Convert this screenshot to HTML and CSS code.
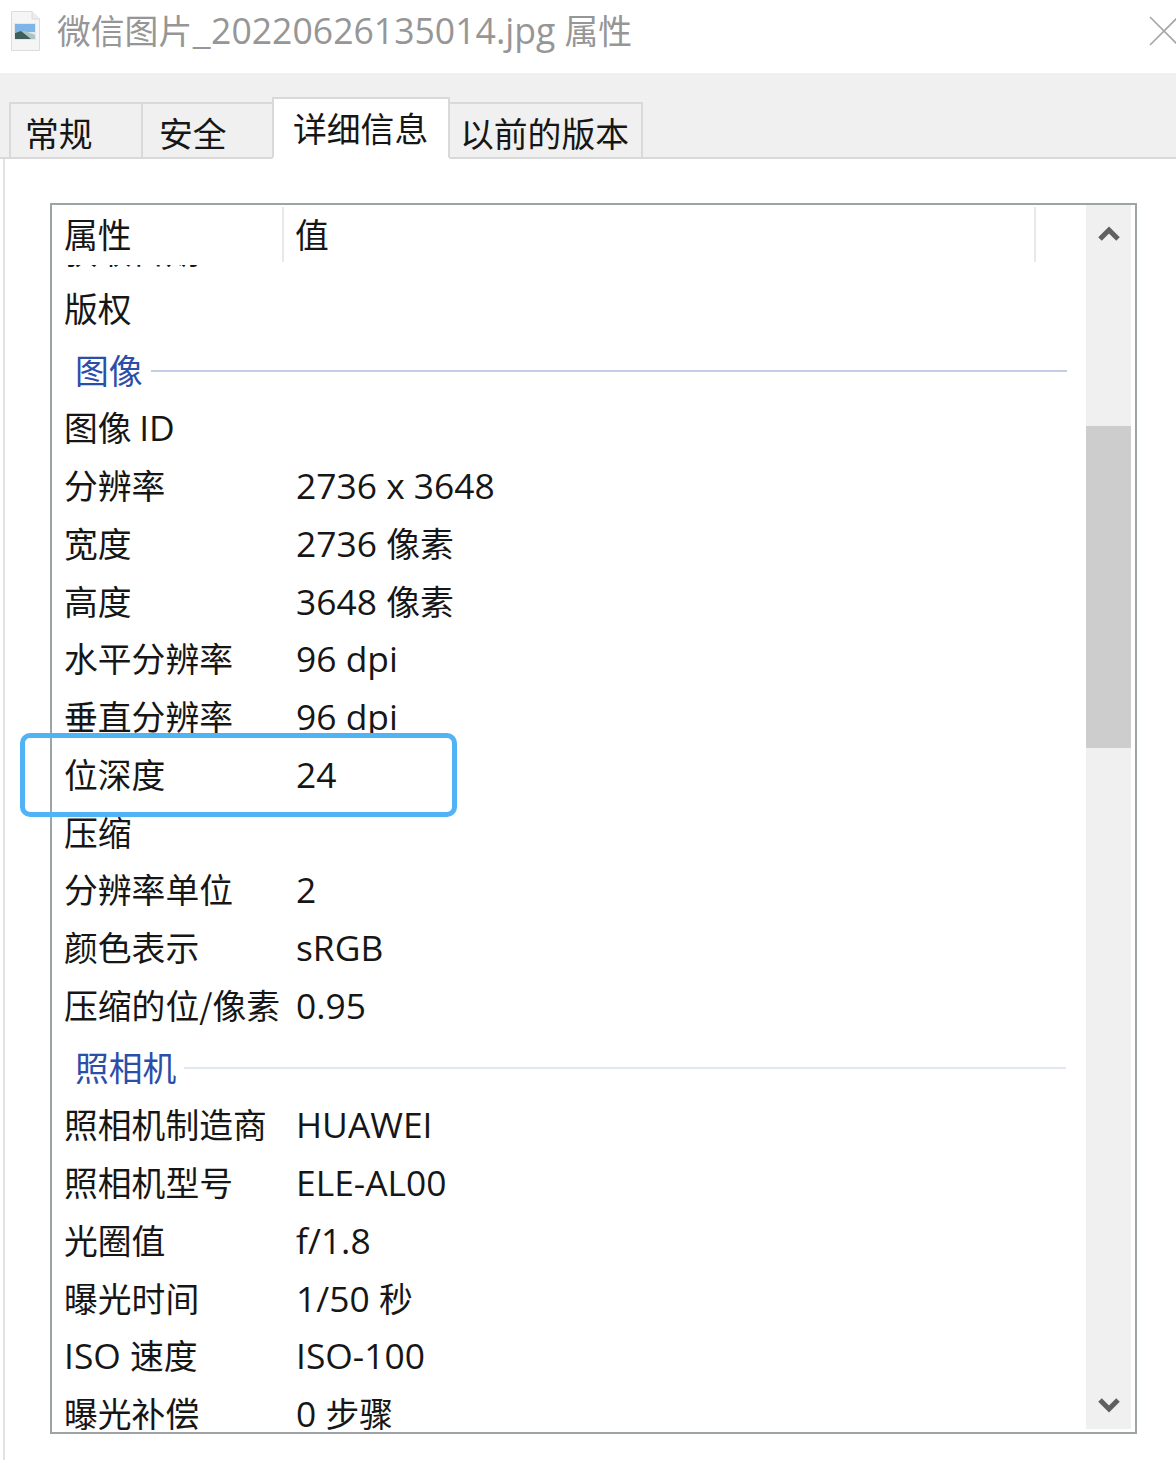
FILE: index.html
```html
<!DOCTYPE html>
<html lang="zh-CN">
<head>
<meta charset="utf-8">
<title>属性</title>
<link rel="stylesheet" href="styles.css">
</head>
<body>
<div class="window">
  <header class="titlebar">
    <svg class="file-icon" width="29" height="40" viewBox="0 0 29 40">
      <path d="M0.5 0.5H21L28.5 8V39.5H0.5Z" fill="#f5f5f5" stroke="#dcdcdc"/>
      <path d="M21 0.5V8H28.5" fill="#ececec" stroke="#dcdcdc"/>
      <rect x="3" y="12" width="22" height="17" fill="#e2e8ee"/>
      <rect x="4" y="13" width="20" height="8" fill="#7fb4e6"/>
      <path d="M4 21L14 20L24 24V28H4Z" fill="#a9c4c4"/>
      <path d="M4 22L10 20L20 28H4Z" fill="#3f5f5c"/>
    </svg>
    <span class="title">微信图片_<span class="lat-title">20220626135014.jpg</span><span class="title-gap"> </span>属性</span>
    <svg class="close" width="30" height="30" viewBox="0 0 30 30"><path d="M1 1L29 29M1 29L29 1" stroke="#a6a6a6" stroke-width="1.6" fill="none"/></svg>
  </header>
  <nav class="tabs">
    <div class="tab t1">常规</div>
    <div class="tab t2">安全</div>
    <div class="tab active">详细信息</div>
    <div class="tab t4">以前的版本</div>
  </nav>
  <main class="panel">
    <section class="listbox">
      <div class="content">
        <div class="head">
          <div class="hcell hname">属性</div>
          <div class="hcell hval">值</div>
        </div>
        <div class="rows">
          <div class="row first"><span class="k">获取日期</span></div>
          <div class="row"><span class="k">版权</span></div>
          <div class="group"><span>图像</span><i></i></div>
          <div class="row"><span class="k">图像 <b>ID</b></span></div>
          <div class="row"><span class="k">分辨率</span><span class="v"><b>2736 x 3648</b></span></div>
          <div class="row"><span class="k">宽度</span><span class="v"><b>2736 </b>像素</span></div>
          <div class="row"><span class="k">高度</span><span class="v"><b>3648 </b>像素</span></div>
          <div class="row"><span class="k">水平分辨率</span><span class="v"><b>96 dpi</b></span></div>
          <div class="row"><span class="k">垂直分辨率</span><span class="v"><b>96 dpi</b></span></div>
          <div class="row"><span class="k">位深度</span><span class="v"><b>24</b></span></div>
          <div class="row"><span class="k">压缩</span></div>
          <div class="row"><span class="k">分辨率单位</span><span class="v"><b>2</b></span></div>
          <div class="row"><span class="k">颜色表示</span><span class="v"><b>sRGB</b></span></div>
          <div class="row"><span class="k">压缩的位/像素</span><span class="v"><b>0.95</b></span></div>
          <div class="group light"><span>照相机</span><i></i></div>
          <div class="row"><span class="k">照相机制造商</span><span class="v"><b>HUAWEI</b></span></div>
          <div class="row"><span class="k">照相机型号</span><span class="v"><b>ELE-AL00</b></span></div>
          <div class="row"><span class="k">光圈值</span><span class="v"><b>f/1.8</b></span></div>
          <div class="row"><span class="k">曝光时间</span><span class="v"><b>1/50 </b>秒</span></div>
          <div class="row"><span class="k"><b>ISO </b>速度</span><span class="v"><b>ISO-100</b></span></div>
          <div class="row"><span class="k">曝光补偿</span><span class="v"><b>0 </b>步骤</span></div>
        </div>
      </div>
      <div class="scrollbar">
        <svg class="arrow up" width="24" height="20" viewBox="0 0 24 20"><path d="M3 16L12 7L21 16" fill="none" stroke="#606060" stroke-width="5"/></svg>
        <div class="track"><div class="thumb"></div></div>
        <svg class="arrow down" width="24" height="20" viewBox="0 0 24 20"><path d="M3 4L12 13L21 4" fill="none" stroke="#606060" stroke-width="5"/></svg>
      </div>
    </section>
  </main>
  <div class="callout"></div>
</div>
</body>
</html>
```

FILE: styles.css
```css
* { box-sizing: border-box; }
html, body { margin: 0; padding: 0; background: #fff; }
body {
  font-family: "Noto Sans CJK SC", "Noto Sans", sans-serif;
  font-size: 33.8px;
  color: #161616;
}
.window {
  position: relative;
  width: 1176px;
  height: 1460px;
  overflow: hidden;
  display: flex;
  flex-direction: column;
}
.titlebar {
  height: 73px;
  flex: none;
  display: flex;
  align-items: center;
  padding: 0 0 0 11px;
  background: #fff;
}
.file-icon { flex: none; margin-top: -11px; }
.title { margin-left: 17px; color: #969696; line-height: 40px; margin-top: -13px; white-space: nowrap; }
.lat-title { font-family: "Open Sans", sans-serif; font-size: 35.6px; }
.title-gap { font-family: "Open Sans", sans-serif; font-size: 35.6px; }
.close { margin-left: auto; margin-right: -3px; margin-top: -12px; flex: none; }

.tabs {
  height: 86px;
  flex: none;
  display: flex;
  align-items: flex-end;
  padding-left: 9px;
  background: #f0f0f0;
  border-bottom: 2px solid #d9d9d9;
}
.tab {
  height: 57px;
  margin-bottom: -2px;
  background: #f0f0f0;
  border: 2px solid #d9d9d9;
  border-right: 0;
  border-bottom: 2px solid #d9d9d9;
  line-height: 58px;
  white-space: nowrap;
  color: #161616;
}
.t1 { width: 132px; padding-left: 14px; }
.t2 { width: 131px; padding-left: 16px; }
.tab.active {
  width: 178px;
  height: 62px;
  background: #fff;
  border-right: 2px solid #d9d9d9;
  border-bottom-color: #fff;
  padding-left: 19px;
  line-height: 57px;
}
.t4 { width: 193px; padding-left: 10px; border-left: 0; border-right: 2px solid #d9d9d9; }

.panel {
  flex: 1;
  min-height: 0;
  margin-left: 3px;
  border-left: 2px solid #e2e2e2;
  padding: 44px 39px 26px 45px;
  background: #fff;
}
.listbox {
  height: 1231px;
  border: 2px solid #9ea3a6;
  display: flex;
  background: #fff;
  padding-right: 4px;
}
.content {
  flex: 1;
  min-width: 0;
  display: flex;
  flex-direction: column;
  overflow: hidden;
}
.head {
  flex: none;
  height: 60px;
  display: flex;
  background: #fff;
}
.hcell { line-height: 54px; height: 55px; margin-top: 2px; }
.hname { width: 232px; padding-left: 12px; border-right: 2px solid #e8e8e8; }
.hval { flex: none; width: 752px; padding-left: 11px; border-right: 2px solid #e8e8e8; }

.rows { flex: 1; overflow: hidden; }
.row {
  display: flex;
  height: 57.75px;
  line-height: 57.75px;
  white-space: pre;
  padding-left: 12px;
}
.row.first { margin-top: -44px; }
.k { width: 232px; flex: none; }
.v { flex: none; }
b { font-weight: 400; font-family: "Open Sans", sans-serif; font-size: 35.4px; }
.group {
  display: flex;
  align-items: center;
  height: 57.75px;
  margin-top: 4px;
  padding-left: 24px;
  color: #2b4ea8;
}
.group span { line-height: 57.75px; flex: none; margin-left: -1px; }
.group i { display: block; height: 2px; flex: none; width: 916px; margin: 4px 0 0 8px; background: #c3cde6; }
.group.light i { background: #e3e7f0; width: 882px; }

.scrollbar {
  width: 45px;
  flex: none;
  background: #f0f0f0;
  display: flex;
  flex-direction: column;
  align-items: center;
  margin-bottom: 3px;
}
.arrow { flex: none; }
.arrow.up { margin: 18px 0 10px 1px; }
.arrow.down { margin: 14px 0 13px 1px; }
.track { flex: 1; width: 100%; }
.thumb { height: 322px; margin-top: 173px; background: #cdcdcd; }

.callout {
  position: absolute;
  left: 20px;
  top: 733px;
  width: 437px;
  height: 84px;
  border: 5px solid #4fb3f6;
  border-radius: 10px;
}
```
